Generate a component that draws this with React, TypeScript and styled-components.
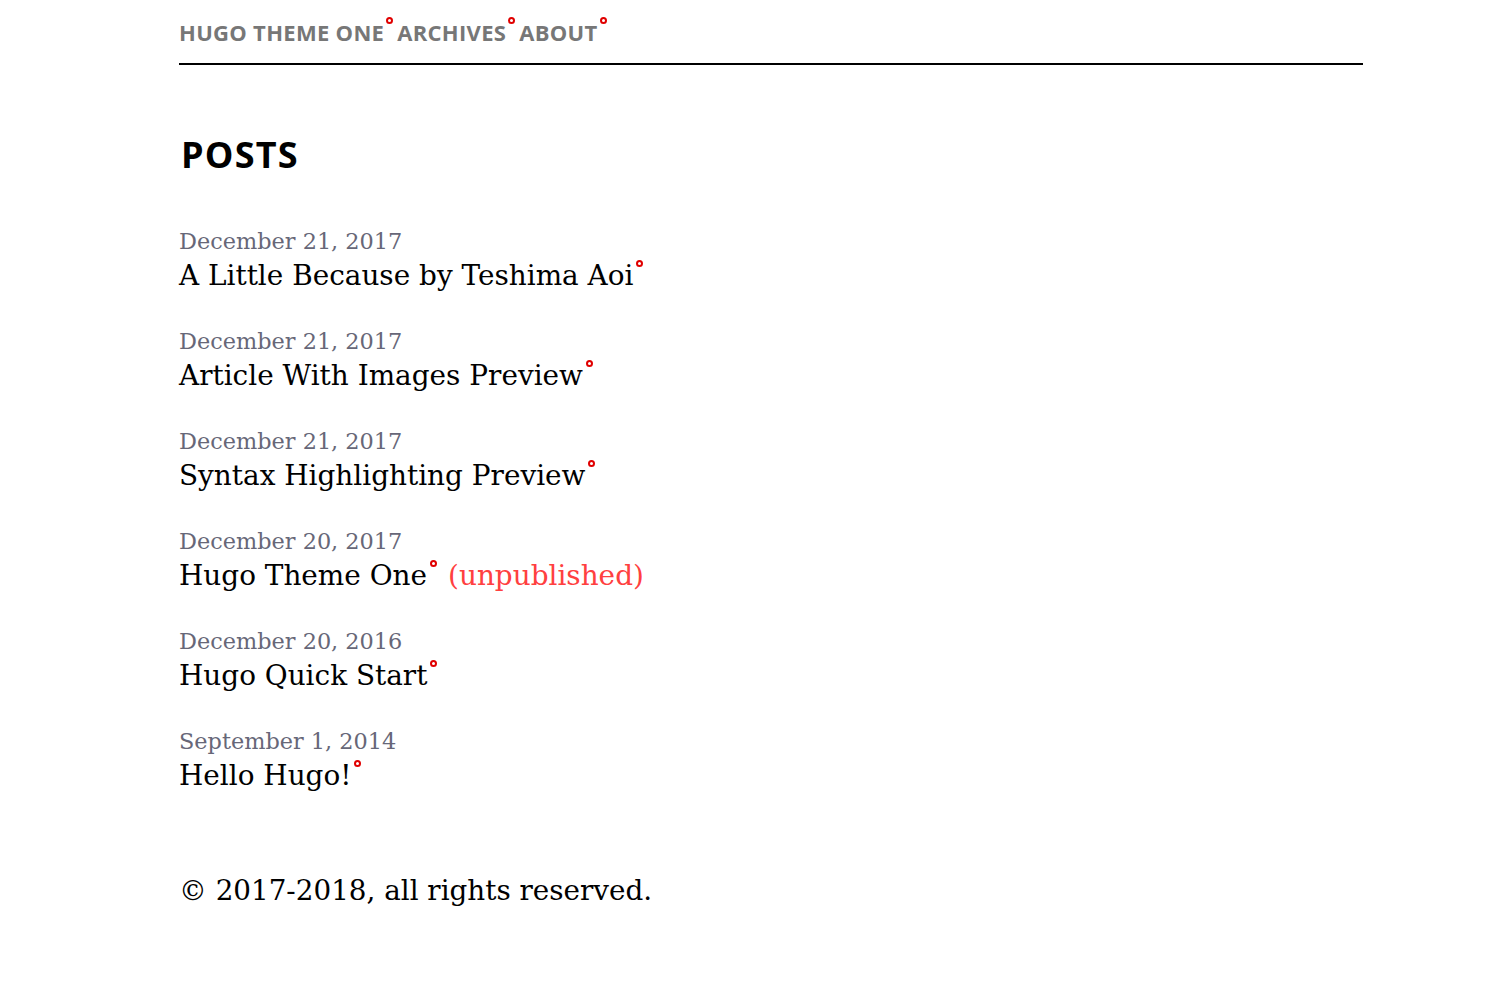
import React from "react";
import styled, { createGlobalStyle } from "styled-components";

const Global = createGlobalStyle`
  html, body { margin: 0; padding: 0; background: #fff; }
  body { font-family: "DejaVu Serif", serif; color: #000; }
`;

const Page = styled.div`
  width: 1184px;
  margin-left: 179px;
`;

const Header = styled.header`
  border-bottom: 2px solid #000;
  height: 65px;
  box-sizing: border-box;
  display: flex;
  align-items: flex-start;
  padding-top: 19px;
`;

const Nav = styled.nav`
  display: flex;
  gap: 4px;
`;

const Dot = styled.span<{ $top?: number; $gap?: number }>`
  display: inline-block;
  width: 7px;
  height: 7px;
  border: 2px solid #e00000;
  border-radius: 50%;
  box-sizing: border-box;
  margin-left: ${(p) => p.$gap ?? 2}px;
  vertical-align: top;
  position: relative;
  top: ${(p) => p.$top ?? 0}px;
`;

const NavLink = styled.a`
  font-family: "Open Sans", sans-serif;
  font-weight: 700;
  font-size: 22px;
  line-height: 26px;
  color: #777;
  text-decoration: none;
  letter-spacing: 0.3px;
`;

const Main = styled.main`
  padding-top: 68px;
`;

const Title = styled.h1`
  font-family: "Open Sans", sans-serif;
  font-weight: 700;
  font-size: 36px;
  letter-spacing: 1.2px;
  margin: 0 0 0 2px;
  line-height: 44px;
`;

const List = styled.ul`
  list-style: none;
  margin: 48px 0 0;
  padding: 0;
  display: flex;
  flex-direction: column;
  gap: 30px;
`;

const Item = styled.li`
  display: flex;
  flex-direction: column;
`;

const DateText = styled.time`
  font-size: 22.4px;
  line-height: 32px;
  color: #676778;
`;

const PostLink = styled.a`
  font-size: 27.9px;
  line-height: 38px;
  color: #000;
  text-decoration: none;
`;

const Unpublished = styled.span`
  color: #ff4040;
  font-size: 27.9px;
  margin-left: 11px;
`;

const Footer = styled.footer`
  margin-top: 76px;
  font-size: 27.8px;
  line-height: 40px;
`;

const posts = [
  { date: "December 21, 2017", title: "A Little Because by Teshima Aoi" },
  { date: "December 21, 2017", title: "Article With Images Preview" },
  { date: "December 21, 2017", title: "Syntax Highlighting Preview" },
  { date: "December 20, 2017", title: "Hugo Theme One", unpublished: true },
  { date: "December 20, 2016", title: "Hugo Quick Start" },
  { date: "September 1, 2014", title: "Hello Hugo!" },
];

export default function App() {
  return (
    <>
      <Global />
      <Page>
        <Header>
          <Nav>
            <NavLink href="#">HUGO THEME ONE<Dot $top={-2} /></NavLink>
            <NavLink href="#">ARCHIVES<Dot $top={-2} /></NavLink>
            <NavLink href="#">ABOUT<Dot $top={-2} /></NavLink>
          </Nav>
        </Header>
        <Main>
          <Title>POSTS</Title>
          <List>
            {posts.map((p) => (
              <Item key={p.title}>
                <DateText>{p.date}</DateText>
                <div>
                  <PostLink href="#">
                    {p.title}
                    <Dot $top={3} $gap={3} />
                  </PostLink>
                  {p.unpublished && <Unpublished>(unpublished)</Unpublished>}
                </div>
              </Item>
            ))}
          </List>
          <Footer>© 2017-2018, all rights reserved.</Footer>
        </Main>
      </Page>
    </>
  );
}
